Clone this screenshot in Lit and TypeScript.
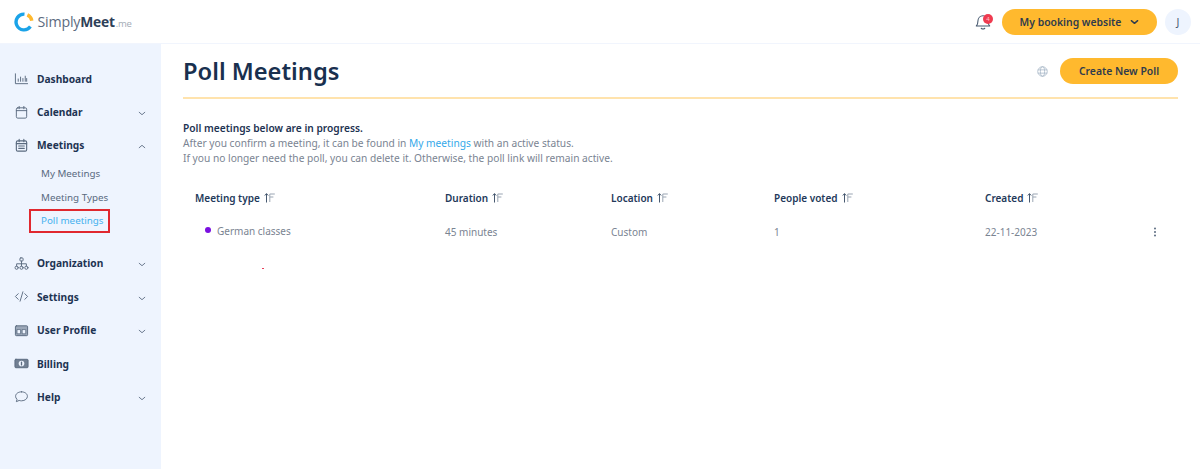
import { LitElement, html, css, svg } from "lit";
import { customElement } from "lit/decorators.js";

const ic = (c: unknown) => html`<svg class="ic" viewBox="0 0 16 16" fill="none" stroke="currentColor" stroke-width="1" stroke-linecap="round" stroke-linejoin="round">${c}</svg>`;
const icons: Record<string, unknown> = {
  dash: ic(svg`<path d="M1.500 3v10.500h13M4.500 11V8.500M7 11V6.500M9.500 11V8M12 11V5.500M13.500 11V8"/>`),
  cal: ic(svg`<rect x="2.500" y="3" width="11" height="11" rx="1.500"/><path d="M2.500 6h11M5.500 1.500v2.500M10.500 1.500v2.500"/>`),
  meet: ic(svg`<rect x="2.500" y="3" width="11" height="11" rx="1.500" stroke-width="1.200"/><path d="M2.500 6h11M5.500 1.500v2.500M10.500 1.500v2.500M5 8.500h6M5 11h6" stroke-width="1.200"/>`),
  org: ic(svg`<rect x="6.300" y="2" width="3.400" height="3.400" rx="1"/><circle cx="2.800" cy="12.500" r="1.700"/><circle cx="8" cy="12.500" r="1.700"/><circle cx="13.200" cy="12.500" r="1.700"/><path d="M8 5.400v5.400M2.800 10.800V8.300h10.400v2.500"/>`),
  code: ic(svg`<path d="M4.500 5 1.500 8l3 3M11.500 5l3 3-3 3M9.500 3l-3 10"/>`),
  user: ic(svg`<rect x="1.500" y="3" width="13" height="10.500" rx="1" fill="currentColor" fill-opacity=".55"/><path d="M3.500 7h3.500v4.500H3.500zM9 7h3.500v4.500H9z" fill="#eef4fe" stroke-width=".8"/>`),
  bill: ic(svg`<rect x="1" y="3.500" width="14" height="9" rx="1" fill="currentColor" fill-opacity=".85"/><circle cx="8" cy="8" r="3" fill="#eef4fe" stroke="none"/><path d="M8 6.500v3" stroke-width="1.400"/>`),
  help: ic(svg`<path d="M8 3c3.600 0 6.300 2.100 6.300 4.800S11.600 12.600 8 12.600c-.9 0-1.700-.1-2.500-.4L2.500 13.500l.7-2.500C2.200 10.100 1.700 9 1.700 7.800 1.700 5.100 4.400 3 8 3z"/>`),
};
const chev = (up = false) => html`<svg class="chev" viewBox="0 0 10 6" fill="none" stroke="currentColor" stroke-width="1.100" stroke-linecap="round" stroke-linejoin="round"><path d=${up ? "M1.500 4.500 5 1.500l3.500 3" : "M1.500 1.500 5 4.500l3.500-3"}></path></svg>`;
const sortIc = html`<svg class="sort" viewBox="0 0 11 10" fill="none" stroke-width="1"><path d="M2.500 9.500V.8M.8 2.500 2.500.6 4.200 2.500" stroke="#46586f"/><path d="M5.800 1h5M5.800 4h3.600M5.800 1v8" stroke="#9aa5b3"/></svg>`;

const nav = [
  { k: "dash", t: "Dashboard" },
  { k: "cal", t: "Calendar", c: 1 },
  { k: "meet", t: "Meetings", c: 2 },
  { k: "org", t: "Organization", c: 1 },
  { k: "code", t: "Settings", c: 1 },
  { k: "user", t: "User Profile", c: 1 },
  { k: "bill", t: "Billing" },
  { k: "help", t: "Help", c: 1 },
];

@customElement("app-root")
export class AppRoot extends LitElement {
  static styles = css`
    :host { display: block; width: 1200px; height: 469px; overflow: hidden; background: #fff; font-family: "Noto Sans", sans-serif; font-size: 10px; color: #6f7a89; position: relative; }
    * { box-sizing: border-box; }
    .top { height: 44px; display: flex; align-items: center; padding: 0 9px 0 14px; border-bottom: 1px solid #f1f5fd; }
    .logo { display: flex; align-items: center; gap: 3.500px; color: #5c6b80; font-size: 14.200px; letter-spacing: -.2px; font-family: "Open Sans", sans-serif; }
    .logo b { color: #2d4058; font-weight: 700; font-size: 13.800px; }
    .logo small { font-size: 9.500px; color: #a3abb6; margin-left: 1px; }
    .logo svg { width: 20px; height: 20px; }
    .spacer { flex: 1; }
    .bell { position: relative; width: 16px; height: 16px; margin-right: 11px; margin-top: 1px; color: #46586f; }
    .bell svg { width: 100%; height: 100%; display: block; }
    .dot { position: absolute; right: -2px; top: 0; width: 10px; height: 10px; border-radius: 50%; background: #ef3b50; color: #ffc2c9; font-size: 6px; line-height: 10px; text-align: center; }
    .btn { background: #ffb92e; border-radius: 14px; height: 26px; font-weight: 600; font-size: 10.400px; display: flex; align-items: center; justify-content: center; color: #2f3b4c; }
    .btn.book { width: 155px; gap: 9px; }
    .btn.book .chev { width: 9px; height: 6px; margin: 0; stroke-width: 1.600; color: #2f3b4c; }
    .avatar { width: 26px; height: 26px; margin-left: 8px; border-radius: 50%; background: #eef4fe; display: flex; align-items: center; justify-content: center; color: #46586f; font-size: 10.500px; }
    .body { display: flex; height: 425px; }
    aside { width: 161px; background: #eef4fe; padding-top: 18px; flex: none; }
    .row { height: 33.400px; display: flex; align-items: center; padding-left: 14px; color: #1d3352; font-weight: 700; font-size: 10.200px; }
    .row .ic { width: 15px; height: 15px; color: #5a6a7f; margin-right: 8px; flex: none; }
    .row span { flex: 1; }
    .chev { width: 8px; height: 5px; color: #5a6a7f; margin-right: 15px; margin-top: 3px; }
    .subs { display: flex; flex-direction: column; padding: 0 0 14px 41px; }
    .sub { height: 23.500px; display: flex; align-items: center; color: #5a6a7f; font-size: 9.800px; }
    .sub.on { color: #45b1ee; position: relative; }
    .sub.on::after { content: ""; box-sizing: border-box; position: absolute; left: -12px; top: 0; width: 81px; height: 24px; border: 2px solid #e0282f; }
    main { flex: 1; padding: 0 22px 0 22px; }
    .head { height: 55px; padding-top: 1px; display: flex; align-items: center; border-bottom: 2px solid #ffe3ad; }
    h1 { margin: 2px 0 0; font: 600 23.700px/1 "Noto Sans", sans-serif; color: #19304f; flex: 1; }
    .globe { width: 11px; height: 11px; margin-right: 12px; color: #a9b8c8; }
    .btn.new { width: 118px; }
    .note { margin-top: 22px; line-height: 15px; font-size: 10.200px; color: #7a8492; }
    .note b { display: block; color: #1d3352; font-weight: 600; }
    .note a { color: #35a9ea; }
    .tbl { margin-top: 17px; }
    .tr { display: grid; grid-template-columns: 250px 166px 163px 211px 1fr 28px; padding-left: 12px; align-items: center; }
    .th { height: 30px; color: #23395a; font-weight: 600; }
    .th > div { display: flex; align-items: center; gap: 4px; }
    .sort { width: 11px; height: 10px; }
    .td { height: 37px; color: #7a8492; }
    .name { display: flex; align-items: center; gap: 6px; padding-left: 10px; margin-top: -2px; }
    .name i { width: 6px; height: 6px; border-radius: 50%; background: #7a0fe0; margin-top: -1px; }
    .more { width: 12px; height: 12px; color: #5a6a7f; margin-left: -1px; }
    .speck { position: absolute; left: 262px; top: 268px; width: 2px; height: 1px; background: #e8405a; }
  `;
  render() {
    return html`
      <div class="top">
        <div class="logo">
          <svg viewBox="0 0 20 20" fill="none" stroke-width="3.400"><path d="M10.500 2.100A7.900 7.900 0 1 0 16.400 14.600" stroke="#1ba3e8"/><path d="M13.400 2.900A7.900 7.900 0 0 1 17.800 8.800" stroke="#ffb92e"/></svg>
          <span>Simply<b>Meet</b><small>.me</small></span>
        </div>
        <div class="spacer"></div>
        <div class="bell">
          <svg viewBox="0 0 18 18" fill="none" stroke="currentColor" stroke-width="1.200" stroke-linejoin="round" stroke-linecap="round"><path d="M1.500 13.500c1.300-1.200 1.800-2.400 1.800-5.500 0-3.500 2.500-6 5.700-6s5.700 2.500 5.700 6c0 3.100.5 4.300 1.800 5.500zM7 16c1.100.9 2.900.9 4 0"/></svg>
          <div class="dot">4</div>
        </div>
        <div class="btn book">My booking website ${chev()}</div>
        <div class="avatar">J</div>
      </div>
      <div class="body">
        <aside>
          ${nav.map((n) => html`
            <div class="row">${icons[n.k]}<span>${n.t}</span>${n.c ? chev(n.c === 2) : ""}</div>
            ${n.c === 2 ? html`<div class="subs">
              <div class="sub">My Meetings</div>
              <div class="sub">Meeting Types</div>
              <div class="sub on">Poll meetings</div>
            </div>` : ""}
          `)}
        </aside>
        <main>
          <div class="head">
            <h1>Poll Meetings</h1>
            <svg class="globe" viewBox="0 0 12 12" fill="none" stroke="currentColor" stroke-width=".9"><circle cx="6" cy="6" r="5.200"/><ellipse cx="6" cy="6" rx="2.300" ry="5.200"/><path d="M1 4.200h10M1 7.800h10"/></svg>
            <div class="btn new">Create New Poll</div>
          </div>
          <div class="note">
            <b>Poll meetings below are in progress.</b>
            After you confirm a meeting, it can be found in <a>My meetings</a> with an active status.<br />
            If you no longer need the poll, you can delete it. Otherwise, the poll link will remain active.
          </div>
          <div class="tbl">
            <div class="tr th">
              ${["Meeting type", "Duration", "Location", "People voted", "Created"].map((t) => html`<div>${t} ${sortIc}</div>`)}
              <div></div>
            </div>
            <div class="tr td">
              <div class="name"><i></i>German classes</div>
              <div>45 minutes</div>
              <div>Custom</div>
              <div>1</div>
              <div>22-11-2023</div>
              <svg class="more" viewBox="0 0 12 12" fill="currentColor"><circle cx="6" cy="2.500" r="1"/><circle cx="6" cy="6" r="1"/><circle cx="6" cy="9.500" r="1"/></svg>
            </div>
          </div>
        </main>
      </div>
      <div class="speck"></div>
    `;
  }
}
